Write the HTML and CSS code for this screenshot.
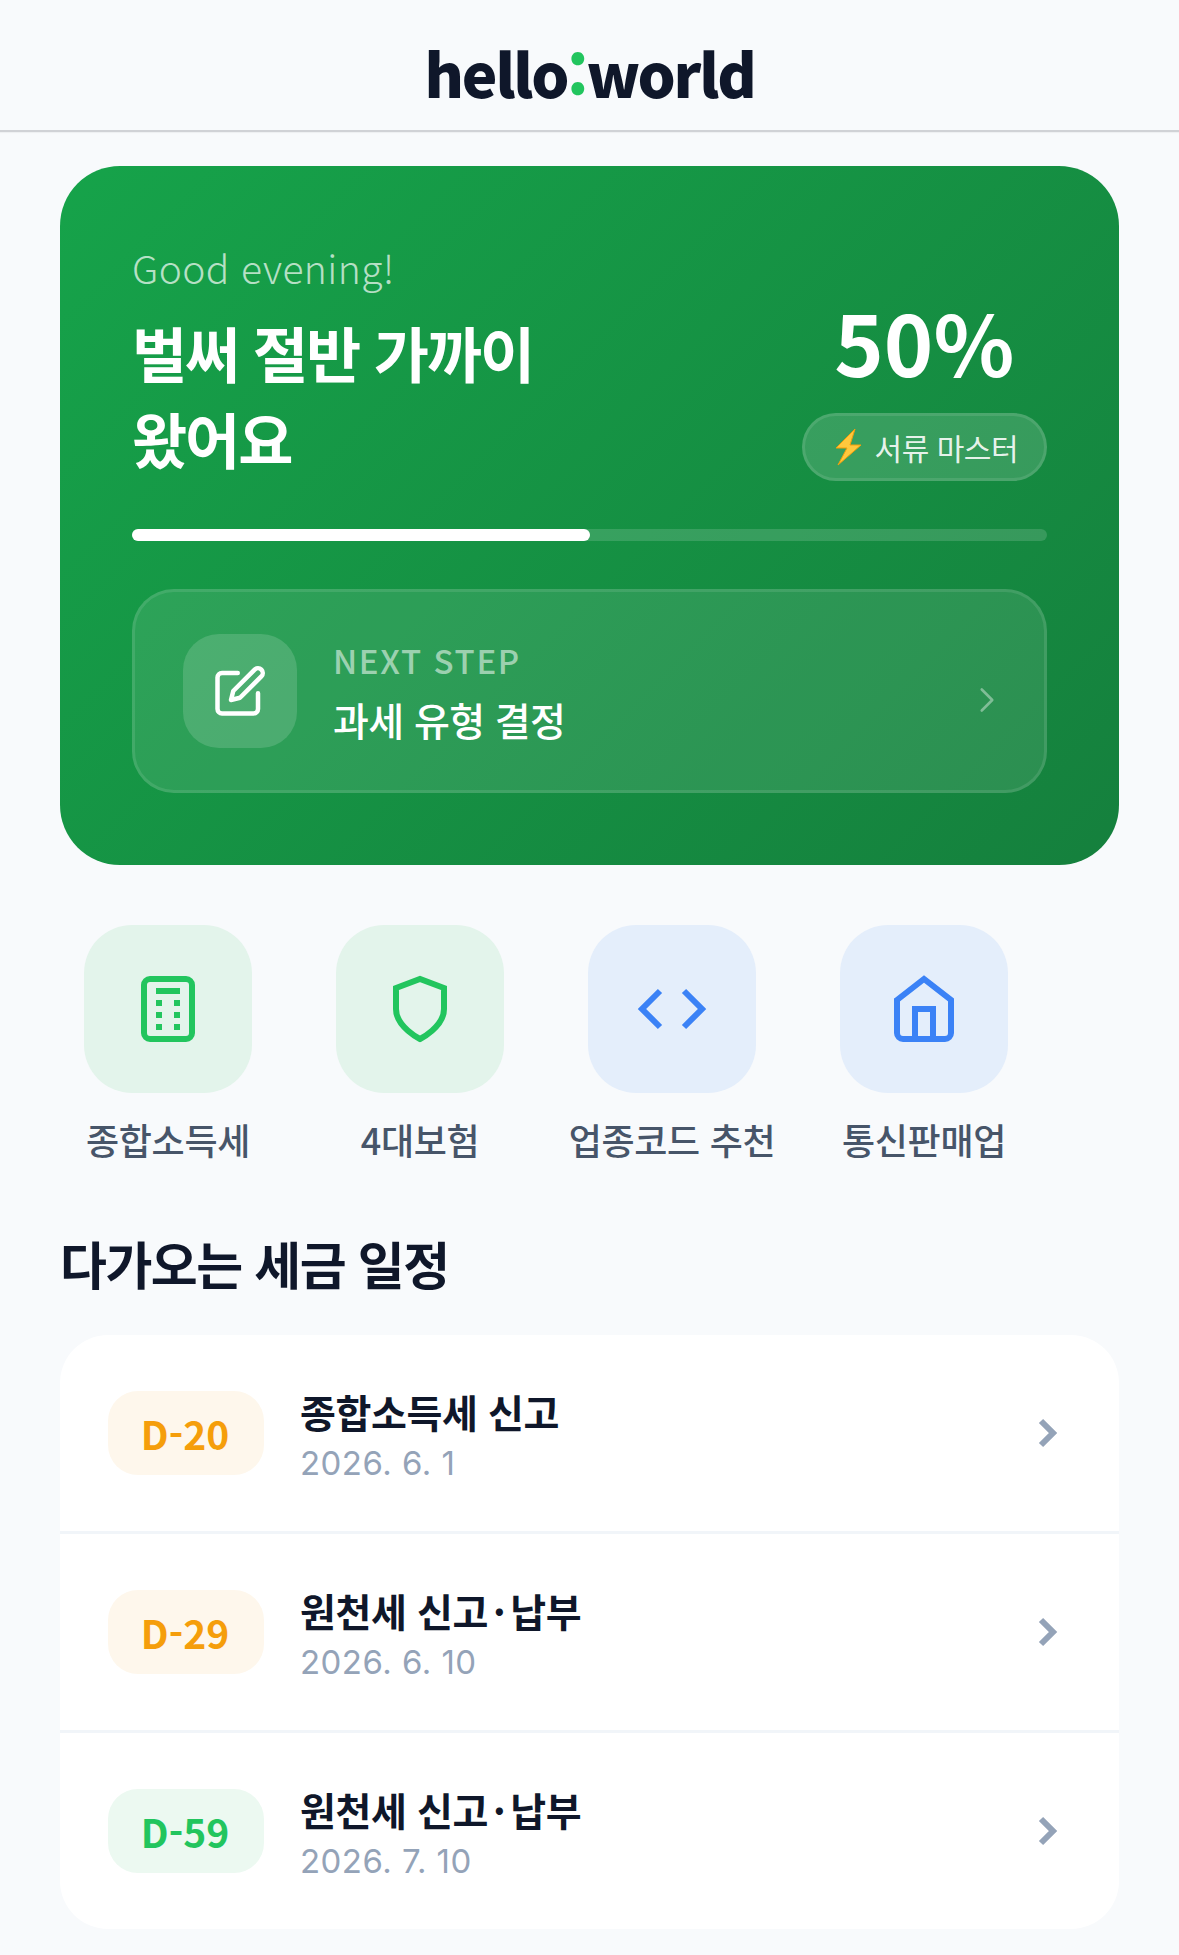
FILE: index.html
```html
<!DOCTYPE html>
<html lang="ko">
<head>
    <meta charset="UTF-8">
    <meta name="viewport" content="width=device-width, initial-scale=1.0">
    <title>hello:world</title>
    <link rel="stylesheet" href="styles.css">
</head>
<body>
    <header class="top-bar">
        <div class="logo">hello<span class="logo-dot">:</span>world</div>
    </header>

    <section class="hero">
        <div class="hero-top">
            <div class="hero-text">
                <p class="greeting">Good evening!</p>
                <h1 class="hero-title">벌써 절반 가까이<br>왔어요</h1>
            </div>
            <div class="hero-score">
                <div class="percent">50%</div>
                <div class="level-badge">
                    <svg class="bolt" viewBox="0 0 27 38"><polygon points="20,1 1,20 12,20 3,37 26,17 15,17" fill="#ffc83d" stroke="#f59e0b" stroke-width="1" stroke-linejoin="round"/></svg>
                    <span>서류 마스터</span>
                </div>
            </div>
        </div>
        <div class="progress"><div class="progress-fill"></div></div>
        <div class="next-step">
            <div class="next-icon">
                <svg class="icon-pen" viewBox="0 0 24 24"><path d="M11 4H4a2 2 0 0 0-2 2v14a2 2 0 0 0 2 2h14a2 2 0 0 0 2-2v-7"/><path d="M18.5 2.5a2.121 2.121 0 0 1 3 3L12 15l-4 1 1-4 9.5-9.5z"/></svg>
            </div>
            <div class="next-text">
                <div class="next-label">NEXT STEP</div>
                <div class="next-title">과세 유형 결정</div>
            </div>
            <svg class="next-arrow" viewBox="0 0 24 24"><polyline points="9 18 15 12 9 6"/></svg>
        </div>
    </section>

    <nav class="shortcuts">
        <div class="shortcut">
            <div class="tile tile-green">
                <svg class="tile-icon" viewBox="0 0 24 24"><rect x="4" y="2" width="16" height="20" rx="2"/><path d="M8 6h8"/><path class="fill" d="M8 9h2v2H8zM14 9h2v2h-2zM8 13h2v2H8zM14 13h2v2h-2zM8 17h2v2H8zM14 17h2v2h-2z"/></svg>
            </div>
            <span class="shortcut-label">종합소득세</span>
        </div>
        <div class="shortcut">
            <div class="tile tile-green">
                <svg class="tile-icon" viewBox="0 0 24 24"><path d="M12 22s8-4 8-10V5l-8-3-8 3v7c0 6 8 10 8 10z"/></svg>
            </div>
            <span class="shortcut-label">4대보험</span>
        </div>
        <div class="shortcut">
            <div class="tile tile-blue">
                <svg class="tile-icon" viewBox="0 0 24 24"><polyline points="16 18 22 12 16 6"/><polyline points="8 6 2 12 8 18"/></svg>
            </div>
            <span class="shortcut-label">업종코드 추천</span>
        </div>
        <div class="shortcut">
            <div class="tile tile-blue">
                <svg class="tile-icon" viewBox="0 0 24 24"><path d="M3 9l9-7 9 7v11a2 2 0 0 1-2 2H5a2 2 0 0 1-2-2z"/><polyline points="9 22 9 12 15 12 15 22"/></svg>
            </div>
            <span class="shortcut-label">통신판매업</span>
        </div>
    </nav>

    <h2 class="section-title">다가오는 세금 일정</h2>

    <div class="schedule">
        <div class="schedule-row">
            <div class="dday dday-orange">D-20</div>
            <div class="schedule-text">
                <div class="schedule-name">종합소득세 신고</div>
                <div class="schedule-date">2026. 6. 1</div>
            </div>
            <svg class="row-arrow" viewBox="0 0 24 24"><polyline points="9 18 15 12 9 6"/></svg>
        </div>
        <div class="schedule-row">
            <div class="dday dday-orange">D-29</div>
            <div class="schedule-text">
                <div class="schedule-name">원천세 신고<span class="name-dot">·</span>납부</div>
                <div class="schedule-date">2026. 6. 10</div>
            </div>
            <svg class="row-arrow" viewBox="0 0 24 24"><polyline points="9 18 15 12 9 6"/></svg>
        </div>
        <div class="schedule-row">
            <div class="dday dday-green">D-59</div>
            <div class="schedule-text">
                <div class="schedule-name">원천세 신고<span class="name-dot">·</span>납부</div>
                <div class="schedule-date">2026. 7. 10</div>
            </div>
            <svg class="row-arrow" viewBox="0 0 24 24"><polyline points="9 18 15 12 9 6"/></svg>
        </div>
    </div>
</body>
</html>
```

FILE: styles.css
```css
body {
    margin: 0;
    padding-bottom: 26px;
    background-color: #f8fafc;
    font-family: "Noto Sans CJK KR", "Noto Sans", sans-serif;
    color: #0f172a;
}

.top-bar {
    height: 130px;
    display: flex;
    justify-content: center;
    align-items: center;
    border-bottom: 2px solid #d0d2d6;
    box-shadow: 0 1px 1px rgba(0, 0, 0, 0.04);
}

.logo {
    padding-top: 14px;
    font-size: 60px;
    font-weight: 900;
    line-height: 1;
    letter-spacing: -0.035em;
}

.logo-dot {
    color: #22c55e;
}

.hero {
    margin: 34px 60px 0;
    padding: 72px;
    border-radius: 60px;
    background: linear-gradient(135deg, #16a34a, #15803d);
    color: white;
}

.hero-top {
    display: flex;
    justify-content: space-between;
    align-items: flex-end;
}

.greeting {
    margin: 0;
    font-size: 39px;
    font-weight: 300;
    line-height: 58px;
    letter-spacing: 0.4px;
    color: rgba(255, 255, 255, 0.7);
}

.hero-title {
    margin: 13px 0 0;
    font-size: 60px;
    font-weight: 700;
    line-height: 86px;
    letter-spacing: -0.035em;
}

.hero-score {
    display: flex;
    flex-direction: column;
    align-items: center;
}

.percent {
    font-size: 84px;
    font-weight: 700;
    line-height: 100px;
    margin-bottom: 22px;
}

.level-badge {
    display: flex;
    align-items: center;
    gap: 13px;
    height: 62px;
    padding: 0 26px 0 30px;
    border: 3px solid rgba(255, 255, 255, 0.1);
    border-radius: 40px;
    background-color: rgba(255, 255, 255, 0.15);
    font-size: 30px;
    letter-spacing: -0.5px;
    color: rgba(255, 255, 255, 0.9);
}

.bolt {
    width: 27px;
    height: 38px;
}

.progress {
    height: 12px;
    margin-top: 48px;
    border-radius: 6px;
    background-color: rgba(255, 255, 255, 0.15);
}

.progress-fill {
    width: 50%;
    height: 100%;
    border-radius: 6px;
    background-color: white;
}

.next-step {
    display: flex;
    align-items: center;
    margin-top: 48px;
    padding: 42px 36px 42px 48px;
    border: 3px solid rgba(255, 255, 255, 0.1);
    border-radius: 42px;
    background-color: rgba(255, 255, 255, 0.1);
}

.next-icon {
    display: flex;
    justify-content: center;
    align-items: center;
    width: 114px;
    height: 114px;
    border-radius: 36px;
    background-color: rgba(255, 255, 255, 0.15);
}

.icon-pen {
    width: 54px;
    height: 54px;
    fill: none;
    stroke: white;
    stroke-width: 2;
    stroke-linecap: round;
    stroke-linejoin: round;
}

.next-text {
    flex: 1;
    margin-left: 36px;
    padding-top: 2px;
}

.next-label {
    font-size: 33px;
    font-weight: 500;
    line-height: 44px;
    letter-spacing: 0.05em;
    color: rgba(255, 255, 255, 0.55);
}

.next-title {
    margin-top: 10px;
    font-size: 39px;
    font-weight: 500;
    line-height: 54px;
    letter-spacing: -0.6px;
}

.next-arrow {
    width: 42px;
    height: 42px;
    margin-top: 18px;
    fill: none;
    stroke: rgba(255, 255, 255, 0.4);
    stroke-width: 1.5;
    stroke-linecap: round;
    stroke-linejoin: round;
}

.shortcuts {
    display: grid;
    grid-template-columns: repeat(4, 252px);
    margin: 60px 0 0 42px;
}

.shortcut {
    display: flex;
    flex-direction: column;
    align-items: center;
    gap: 19px;
}

.tile {
    display: flex;
    justify-content: center;
    align-items: center;
    width: 168px;
    height: 168px;
    border-radius: 48px;
}

.tile-green {
    background-color: #e3f4eb;
    color: #22c55e;
}

.tile-blue {
    background-color: #e4eefb;
    color: #3b82f6;
}

.tile-icon {
    width: 72px;
    height: 72px;
    fill: none;
    stroke: currentColor;
    stroke-width: 2;
}

.tile-icon .fill {
    fill: currentColor;
    stroke: none;
}

.shortcut-label {
    font-size: 36px;
    font-weight: 500;
    line-height: 54px;
    letter-spacing: -0.3px;
    white-space: nowrap;
    color: #475569;
}

.section-title {
    margin: 60px 60px 35px;
    font-size: 51px;
    font-weight: 700;
    line-height: 74px;
    letter-spacing: -0.03em;
}

.schedule {
    margin: 0 60px;
    border-radius: 48px;
    background-color: white;
    overflow: hidden;
}

.schedule-row {
    display: flex;
    align-items: center;
    padding: 48px;
    border-bottom: 3px solid #f1f5f9;
}

.schedule-row:last-child {
    border-bottom: none;
}

.dday {
    display: flex;
    justify-content: center;
    align-items: center;
    box-sizing: border-box;
    width: 156px;
    height: 84px;
    padding-right: 2px;
    border-radius: 30px;
    font-size: 39px;
    font-weight: 700;
}

.dday-orange {
    background-color: #fef7ec;
    color: #f59e0b;
}

.dday-green {
    background-color: #ecf9f1;
    color: #22c55e;
}

.schedule-text {
    flex: 1;
    margin-left: 36px;
}

.schedule-name {
    font-size: 39px;
    font-weight: 700;
    line-height: 56px;
    letter-spacing: -0.4px;
}

.name-dot {
    margin: 0 5px;
}

.schedule-date {
    margin-bottom: -4px;
    font-family: Inter, "Noto Sans", sans-serif;
    font-size: 33px;
    line-height: 48px;
    letter-spacing: 0.45px;
    color: #94a3b8;
}

.row-arrow {
    width: 48px;
    height: 48px;
    fill: none;
    stroke: #94a3b8;
    stroke-width: 3;
}
```
